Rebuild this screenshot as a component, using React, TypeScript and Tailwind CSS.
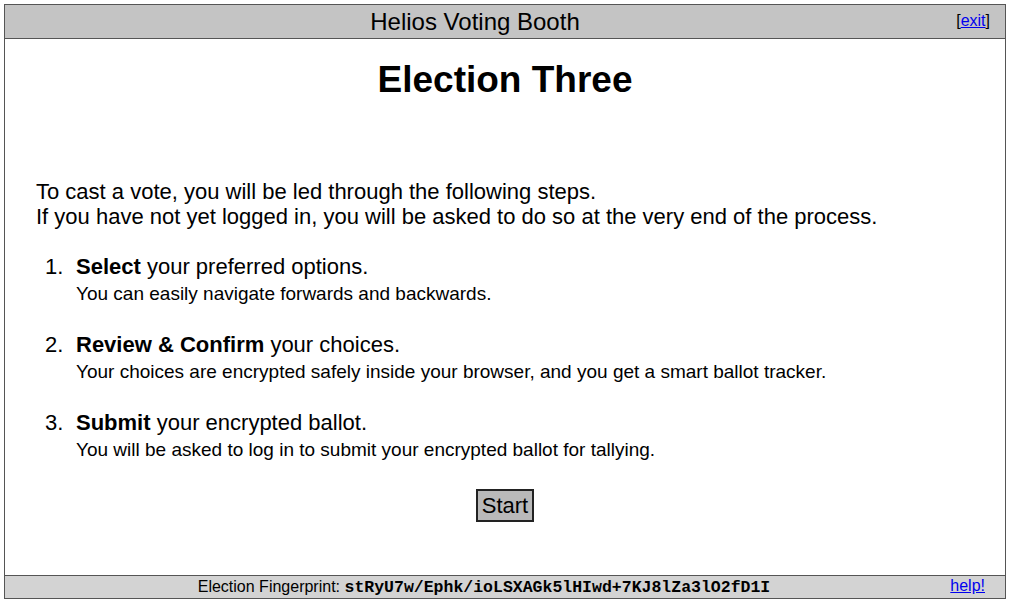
export default function App() {
  const steps = [
    { bold: 'Select', rest: ' your preferred options.', sub: 'You can easily navigate forwards and backwards.' },
    { bold: 'Review & Confirm', rest: ' your choices.', sub: 'Your choices are encrypted safely inside your browser, and you get a smart ballot tracker.' },
    { bold: 'Submit', rest: ' your encrypted ballot.', sub: 'You will be asked to log in to submit your encrypted ballot for tallying.' },
  ]

  return (
    <div className="h-[603px] w-[1010px] bg-white p-[4px] font-['Liberation_Sans',Arial,sans-serif] text-black">
      <div className="flex h-[595px] flex-col border border-[#555]">
        {/* header */}
        <div className="relative flex h-[34px] shrink-0 items-center justify-center border-b border-[#555] bg-[#c4c4c4] pr-[60px]">
          <span className="text-[24px] leading-[28px]">Helios Voting Booth</span>
          <span className="absolute right-[15px] top-[6px] text-[16px] leading-[20px]">
            [<a href="#" className="text-[#0000ee] underline">exit</a>]
          </span>
        </div>

        {/* main */}
        <div className="flex-1 px-[31px]">
          <h1 className="mt-[20px] text-center text-[37px] font-bold leading-[42px]">Election Three</h1>

          <p className="mt-[78px] text-[22px] leading-[25px]">
            To cast a vote, you will be led through the following steps.
            <br />
            If you have not yet logged in, you will be asked to do so at the very end of the process.
          </p>

          <ol className="mt-[25px] flex flex-col gap-[27px]">
            {steps.map((s, i) => (
              <li key={i} className="flex">
                <span className="w-[40px] pl-[9px] text-[22px] leading-[25px]">{i + 1}.</span>
                <div>
                  <div className="text-[22px] leading-[25px]">
                    <b>{s.bold}</b>
                    {s.rest}
                  </div>
                  <div className="mt-[3px] text-[19px] leading-[23px]">{s.sub}</div>
                </div>
              </li>
            ))}
          </ol>

          <div className="mt-[28px] flex justify-center">
            <button className="h-[33px] w-[58px] border-2 border-[#222] bg-[#b9b9b9] text-[22px] leading-none">
              Start
            </button>
          </div>
        </div>

        {/* footer */}
        <div className="relative flex h-[23px] shrink-0 items-center justify-center border-t border-[#555] bg-[#d3d3d3] pr-[42px] text-[16px] leading-[20px]">
          <span>
            Election Fingerprint:{' '}
            <b className="font-['Liberation_Mono','Courier_New',monospace] text-[16.5px]">stRyU7w/Ephk/ioLSXAGk5lHIwd+7KJ8lZa3lO2fD1I</b>
          </span>
          <a href="#" className="absolute right-[20px] top-[0px] text-[#0000ee] underline">help!</a>
        </div>
      </div>
    </div>
  )
}
